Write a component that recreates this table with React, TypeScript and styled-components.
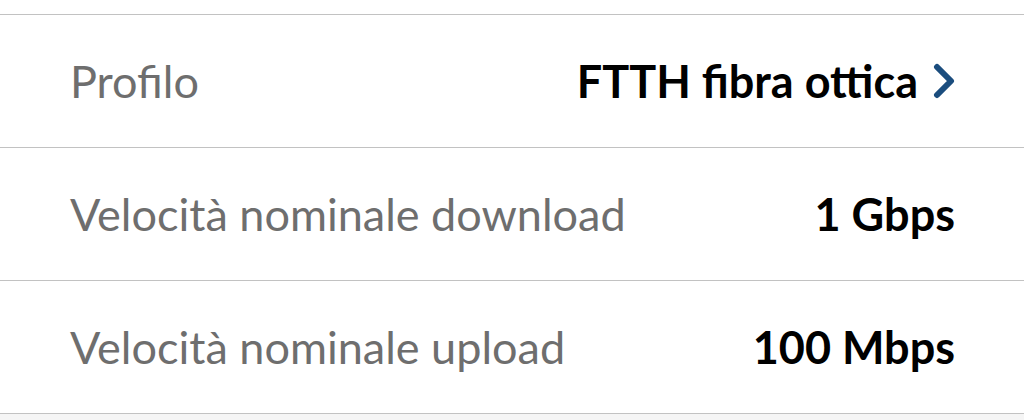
import React from 'react';
import styled, { createGlobalStyle } from 'styled-components';

const GlobalStyle = createGlobalStyle`
  html, body {
    margin: 0;
    padding: 0;
    background: #f5f5f5;
  }
`;

const Page = styled.div`
  background: #ffffff;
  padding-top: 14px;
  font-family: Lato, 'Open Sans', sans-serif;
`;

const List = styled.div`
  border-top: 1px solid #c2c2c2;
`;

const Row = styled.div`
  display: flex;
  align-items: center;
  justify-content: space-between;
  height: 132px;
  padding: 0 69px 0 70px;
  border-bottom: 1px solid #c2c2c2;
`;

const Label = styled.span`
  font-size: 45px;
  color: #6e6e6e;
`;

const Value = styled.span`
  display: flex;
  align-items: center;
  gap: 15px;
  font-size: 45px;
  font-weight: 700;
  color: #000000;
`;

const Chevron = () => (
  <svg width="22" height="36" viewBox="0 0 22 36">
    <path d="M4 4 L18 18 L4 32" fill="none" stroke="#1b4d7e" strokeWidth="6" strokeLinecap="round" strokeLinejoin="round" />
  </svg>
);

const rows = [
  { label: 'Profilo', value: 'FTTH fibra ottica', link: true },
  { label: 'Velocità nominale download', value: '1 Gbps', link: false },
  { label: 'Velocità nominale upload', value: '100 Mbps', link: false },
];

const App: React.FC = () => (
  <>
    <GlobalStyle />
    <Page>
      <List>
        {rows.map((r) => (
          <Row key={r.label}>
            <Label>{r.label}</Label>
            <Value>
              {r.value}
              {r.link && <Chevron />}
            </Value>
          </Row>
        ))}
      </List>
    </Page>
  </>
);

export default App;
